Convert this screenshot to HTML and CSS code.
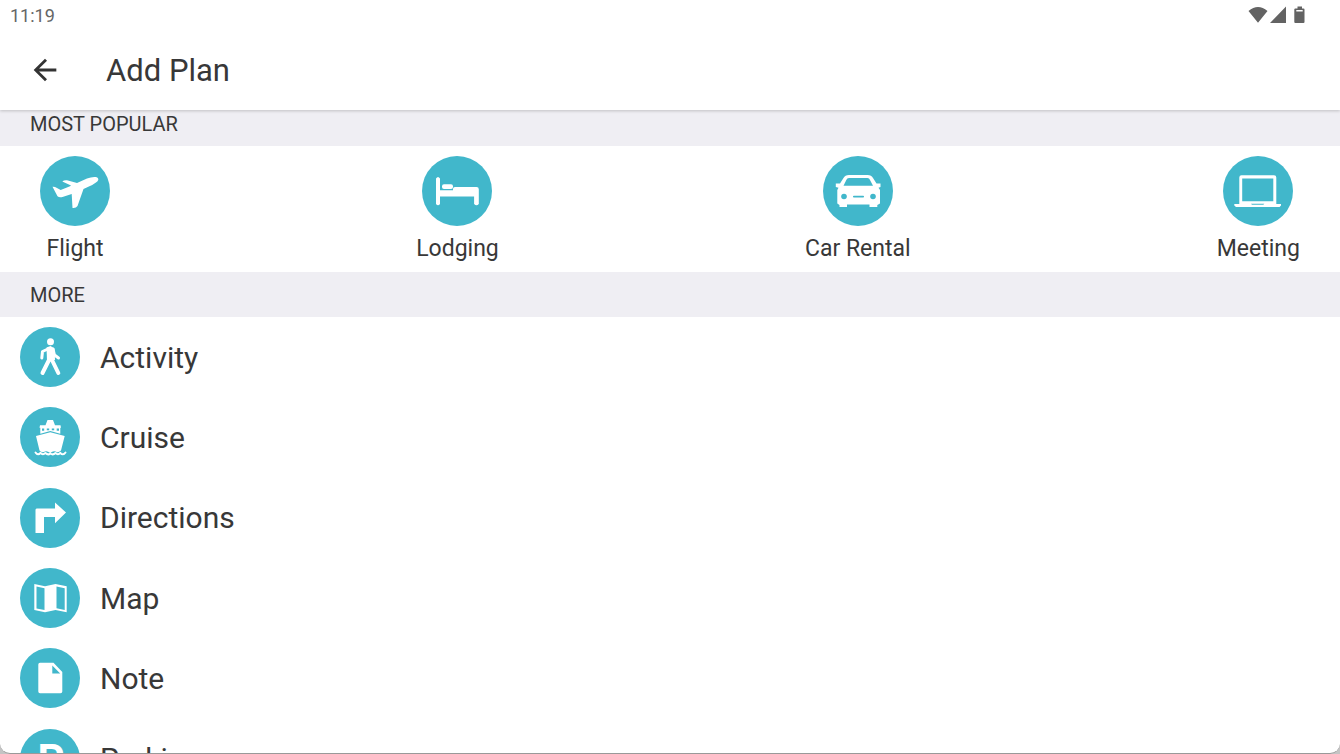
FILE: index.html
```html
<!DOCTYPE html>
<html lang="en">
<head>
<meta charset="utf-8">
<meta name="viewport" content="width=device-width, initial-scale=1">
<title>Add Plan</title>
<link rel="stylesheet" href="styles.css">
</head>
<body>
<div class="screen">
  <header class="top">
    <div class="status">
      <time>11:19</time>
      <svg class="status-icons" width="60" height="20" viewBox="0 0 60 20" aria-hidden="true">
        <path d="M0.5 6Q10 -2 19.500 6L10 17.800Z M38 1.500V18H22Z M49.500 1.500h4.500v2h1.500q1 0 1 1v12.500q0 1-1 1h-8.200q-1 0-1-1V4.500q0-1 1-1h2.200z"/>
        <path class="battery-gap" d="M48.300 5h6.400v1.500h-6.400z"/>
      </svg>
    </div>
    <div class="toolbar">
      <button class="back" aria-label="Back">
        <svg width="34" height="34" viewBox="0 0 24 24"><path d="M20 11H7.830l5.590-5.590L12 4l-8 8 8 8 1.410-1.410L7.830 13H20z"/></svg>
      </button>
      <h1>Add Plan</h1>
    </div>
  </header>
  <main>
    <h2>MOST POPULAR</h2>
    <nav class="popular" aria-label="Most popular">
      <a href="#flight">
        <svg class="disc" viewBox="0 0 70 70"><circle cx="35" cy="35" r="35"/>
          <path d="M12.500 30.700Q15 30.500 16.500 31.700L20.700 34L30 30.300L31 29.500L22.300 25.500Q24 24 27 24.300L37 27L47 22.500Q52 20.500 56 21Q60 22.500 57.300 25.500Q54 28.500 43.500 33L37.500 50Q36 52.500 32.500 52L31.700 38L22.500 41Q19.500 42 17.500 40.300Z"/></svg>
        <span>Flight</span>
      </a>
      <a href="#lodging">
        <svg class="disc" viewBox="0 0 70 70"><circle cx="35" cy="35" r="35"/>
          <path d="M14 22.500q2-3 4 0V34.300H31v-1.500q0-1.800 2-1.800H54.500q2.300 0 2.300 2.300V48q-2.300 2.500-4.700 0v-7.400H18V48q-2 2.500-4 0z"/><rect x="20" y="28.300" width="11" height="4.700" rx="2"/></svg>
        <span>Lodging</span>
      </a>
      <a href="#car">
        <svg class="disc" viewBox="0 0 70 70"><circle cx="35" cy="35" r="35"/>
          <path fill-rule="evenodd" d="M17 27.500L20.500 22Q22 19 26 19H44.500Q48.500 19 50 22L53.500 27.500H57.500V31L55.500 31.700L57 34V47.500L54.300 49V51H46.500V48.500H24V51H16.500V49L14.300 47.500V34L15.500 31.700L12.800 31V27.500ZM26 22Q24 22 23.300 24L20.500 29.700H50L47 24Q46.300 22 44.500 22Z"/><g class="cut"><circle cx="21" cy="40.500" r="2.800"/><circle cx="50" cy="40.500" r="2.800"/><rect x="30" y="39.800" width="11" height="1.700" rx=".8"/></g></svg>
        <span>Car Rental</span>
      </a>
      <a href="#meeting">
        <svg class="disc" viewBox="0 0 70 70"><circle cx="35" cy="35" r="35"/>
          <path fill-rule="evenodd" d="M18.500 19.300H51q2.300 0 2.300 2.300V48H58v1.500L56.500 51H13l-1.700-1.500V48h5V21.600q0-2.300 2.200-2.300zM19.200 22.500V45.300H50.300V22.500z"/><path class="cut" d="M28 47.800h13.300l-1 1h-11.300z"/></svg>
        <span>Meeting</span>
      </a>
    </nav>
    <h2>MORE</h2>
    <nav class="more" aria-label="More">
      <a href="#activity">
        <svg class="disc" viewBox="0 0 60 60"><circle cx="30" cy="30" r="30"/>
          <circle cx="30.500" cy="14.800" r="3.500"/><path d="M26.500 20.500L30.500 19L34.500 21.500L35 33L27 33.500Z"/><path class="limb" d="M29 21.500L22.500 24.500L21.800 31M33 22L34.500 28L38.500 31"/><path class="leg" d="M29.500 32L22.500 46M31.500 32L38.300 46"/></svg>
        <span>Activity</span>
      </a>
      <a href="#cruise">
        <svg class="disc" viewBox="0 0 60 60"><circle cx="30" cy="30" r="30"/>
          <path d="M27.500 13H33L35 18.300H40.500L41 20.700H40.300V26.700L30.300 24L20.300 26.700V20.700H19.500L20 18.300H25.500Z"/><path d="M30.300 25.300L44.700 29L41 43.500Q38 46.500 35.500 44.500Q33 43.500 30.300 46Q27 43.500 25 44.500Q22 46.500 19.500 43.500L16 29Z"/><path class="wave" d="M15.500 45.500Q18 49 20.500 45.800Q22.800 48.500 25.400 46Q28 48.500 30.300 46.500Q33 48.500 35.500 46Q38 48.500 40.300 45.800Q43 49 45.500 45.500"/><path class="cut" d="M22 21.500h2.200v2.300H22zM26.800 21.500h2.400v1.800h-2.400zM31.800 21.500h2.400v1.800h-2.400zM36.700 21.500H39v2.300h-2.300z"/></svg>
        <span>Cruise</span>
      </a>
      <a href="#directions">
        <svg class="disc" viewBox="0 0 60 60"><circle cx="30" cy="30" r="30"/>
          <path d="M16.500 20.500H35V14.500L46 24.500L35 35.300V29H24V45H15.500V21.500Z"/></svg>
        <span>Directions</span>
      </a>
      <a href="#map">
        <svg class="disc" viewBox="0 0 60 60"><circle cx="30" cy="30" r="30"/>
          <path fill-rule="evenodd" d="M14.300 16L25 18.300L35.500 16L46.700 18.300V44.200L35.500 42L25 44.200L14.300 42ZM16.500 18.500V40.500L24.500 42V20.300ZM36.500 18.500V40.300L44.700 42V20.300Z"/></svg>
        <span>Map</span>
      </a>
      <a href="#note">
        <svg class="disc" viewBox="0 0 60 60"><circle cx="30" cy="30" r="30"/>
          <path fill-rule="evenodd" d="M20 14.700H33.500L42.300 24V43.500q0 1.800-1.800 1.800H20q-1.700 0-1.700-1.800V16.500q0-1.800 1.700-1.800zM32.300 17.500V25.500H40.200Z"/></svg>
        <span>Note</span>
      </a>
      <a href="#parking">
        <svg class="disc" viewBox="0 0 60 60" aria-hidden="true"><circle cx="30" cy="30" r="30"/><text x="31" y="45" text-anchor="middle">P</text></svg>
        <span>Parking</span>
      </a>
    </nav>
  </main>
</div>
</body>
</html>
```
FILE: styles.css
```css
* { box-sizing: border-box; }

body {
  margin: 0;
  height: 100vh;
  overflow: hidden;
  background: #c4c4c4;
  color: #383838;
  font-family: Roboto, sans-serif;
}

.screen {
  display: flex;
  flex-direction: column;
  height: 100vh;
  overflow: hidden;
  background: #fff;
  border-bottom: 1px solid #999;
  border-radius: 0 0 10px 10px;
}

.top {
  flex: none;
  z-index: 1;
  background: #fff;
  box-shadow: 0 1px 3px rgba(0, 0, 0, 0.2);
}

.status {
  display: flex;
  align-items: center;
  justify-content: space-between;
  height: 30px;
  padding: 0 32px 0 10px;
  color: #666;
  font-size: 18px;
}

.status-icons { fill: #636363; }
.battery-gap { fill: #fff; }

.toolbar {
  display: flex;
  align-items: center;
  gap: 44px;
  height: 80px;
  padding: 0 28px;
}

.back {
  display: flex;
  padding: 0;
  border: 0;
  background: none;
  fill: #333;
}

h1 {
  margin: 0;
  font-size: 31px;
  font-weight: 400;
}

main {
  flex: 1;
  min-height: 0;
  margin-top: -9px;
  overflow: hidden;
}

h2 {
  display: flex;
  align-items: center;
  height: 45px;
  margin: 0;
  padding: 0 30px;
  background: #efeef3;
  font-size: 20px;
  font-weight: 400;
}

a {
  display: flex;
  align-items: center;
  color: inherit;
  text-decoration: none;
}

.popular {
  display: flex;
  justify-content: space-between;
  height: 126px;
  padding: 10px 40px;
}

.popular a {
  flex-direction: column;
  gap: 9px;
  font-size: 23px;
}

.disc {
  flex: none;
  fill: #fff;
}

.disc > circle:first-child,
.cut { fill: #41b7cb; }

.popular .disc { width: 70px; height: 70px; }
.more .disc { width: 60px; height: 60px; }

.more {
  display: grid;
  grid-auto-rows: 1fr;
  height: 482px;
}

.more a {
  gap: 20px;
  padding: 0 20px;
  font-size: 30px;
}

.limb, .leg, .wave {
  fill: none;
  stroke: #fff;
  stroke-linecap: round;
  stroke-linejoin: round;
}

.limb { stroke-width: 3px; }
.leg { stroke-width: 4px; }
.wave { stroke-width: 2px; }

.disc text {
  font-size: 42px;
  font-weight: 700;
}
```
